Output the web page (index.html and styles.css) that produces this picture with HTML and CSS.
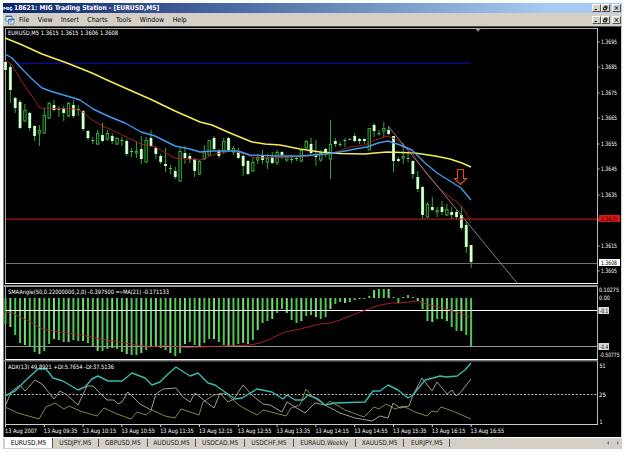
FILE: index.html
```html
<!DOCTYPE html>
<html>
<head lang="en">
    <meta charset="UTF-8">
    <title>18621: MIG Trading Station - [EURUSD,M5]</title>
    <link rel="stylesheet" href="styles.css">
</head>
<body>
<div class="window">
    <div class="titlebar">
        <svg class="logo" width="10" height="8" viewBox="0 0 10 8"><path d="M1 6V3l1.5 2L4 3v3M5.2 3v3M9 3.4H7V6h2V4.7" /></svg>
        <span class="title">18621: MIG Trading Station - [EURUSD,M5]</span>
        <div class="buttons">
            <svg class="btn" viewBox="0 0 9 8"><path d="M2 6h3" /></svg>
            <svg class="btn" viewBox="0 0 9 8"><path d="M3.5 3V1.5h3v3H5.5M2 3.5h3.5v3H2z" /></svg>
            <svg class="btn close" viewBox="0 0 9 8"><path d="M2.5 1.8l4 4.4M6.5 1.8l-4 4.4" /></svg>
        </div>
    </div>
    <div class="menubar">
        <svg class="docicon" width="10" height="10" viewBox="0 0 10 10">
            <path fill="#fff" stroke="#4a86c8" d="M1 1h6v5H1zM3.5 4h5.5v5H3.5z" />
            <path stroke="#2f62b0" fill="none" d="M1 1.5h6M3.5 4.5H9M5 7.5l1-1 1 1" />
        </svg>
        <ul class="menu">
            <li>File</li>
            <li>View</li>
            <li>Insert</li>
            <li>Charts</li>
            <li>Tools</li>
            <li>Window</li>
            <li>Help</li>
        </ul>
        <div class="buttons">
            <svg class="btn" viewBox="0 0 9 8"><path d="M2 6h3" /></svg>
            <svg class="btn" viewBox="0 0 9 8"><path d="M3.5 3V1.5h3v3H5.5M2 3.5h3.5v3H2z" /></svg>
            <svg class="btn close" viewBox="0 0 9 8"><path d="M2.5 1.8l4 4.4M6.5 1.8l-4 4.4" /></svg>
        </div>
    </div>
    <div class="charts">
        <svg id="price" class="pane" width="617" height="258" viewBox="4 27 617 258"></svg>
        <svg id="angle" class="pane" width="617" height="75" viewBox="4 285 617 75"></svg>
        <svg id="adx" class="pane" width="617" height="77" viewBox="4 360 617 77"></svg>
    </div>
    <div class="tabbar">
        <ul class="tabs">
            <li class="active">EURUSD,M5</li>
            <li class="narrow">USDJPY,M5</li>
            <li>GBPUSD,M5</li>
            <li>AUDUSD,M5</li>
            <li>USDCAD,M5</li>
            <li>USDCHF,M5</li>
            <li class="wide">EURAUD,Weekly</li>
            <li>XAUUSD,M5</li>
            <li class="narrow">EURJPY,M5</li>
        </ul>
        <svg class="arrows" width="14" height="6" viewBox="0 0 14 6"><path d="M3 1L1 3l2 2zM11 1l2 2-2 2z" /></svg>
    </div>
</div>
<script src="chart.js"></script>
</body>
</html>
```
FILE: styles.css
```css
*{
    margin: 0;
    padding: 0;
    box-sizing: border-box;
}
body{
    width: 625px;
    height: 452px;
    padding: 3px 3px 0 3px;
    background: #fbfdfd;
    font-family: "DejaVu Sans Condensed","DejaVu Sans",sans-serif;
    font-size: 7px;
    overflow: hidden;
}
ul{
    list-style: none;
}
svg{
    display: block;
}
.window{
    width: 619px;
    height: 446px;
    background: #d4d0c8;
}
.titlebar{
    height: 10px;
    display: flex;
    align-items: center;
    padding-right: 1px;
    background: linear-gradient(to right,#0a246a,#a6caf0 88%);
}
.logo{
    fill: none;
    stroke: #fff;
}
.title{
    flex: 1;
    padding-left: 1px;
    color: #fff;
    font-size: 6.7px;
    font-weight: bold;
    line-height: 10px;
    white-space: nowrap;
}
.buttons{
    display: flex;
}
.btn{
    width: 9px;
    height: 8px;
    background: #d4d0c8;
    border: 1px solid #fff;
    border-right-color: #555;
    border-bottom-color: #555;
    fill: none;
    stroke: #000;
    stroke-width: 1.2;
}
.close{
    margin-left: 2px;
}
.menubar{
    height: 13px;
    display: flex;
    align-items: center;
    padding: 0 1px 0 2px;
}
.menu{
    flex: 1;
    display: flex;
    gap: 8.5px;
    padding-left: 4px;
    font-size: 6.9px;
    line-height: 12px;
    color: #000;
}
.charts{
    height: 411px;
    padding-left: 1px;
    background: #000;
    border-top: 1px solid #55534f;
    border-left: 1px solid #808080;
    border-right: 1px solid #d4d0c8;
    overflow: hidden;
}
.pane{
    margin-left: -1px;
    font-size: 6px;
    fill: #fff;
}
.line{
    fill: none;
    stroke-linejoin: round;
}
.tabbar{
    height: 12px;
    display: flex;
    justify-content: space-between;
    background: #d4d0c8;
    border-top: 1px solid #fff;
}
.tabs{
    display: flex;
    padding-left: 2px;
}
.tabs li{
    width: 48.7px;
    height: 8px;
    margin-top: 1px;
    border-right: 1px solid #555;
    text-align: center;
    font-size: 6.6px;
    line-height: 8px;
    color: #222;
    white-space: nowrap;
}
.tabs .active{
    width: 48px;
    height: 10px;
    margin-top: 0;
    background: #fff;
    line-height: 10px;
    color: #000;
}
.tabs .narrow{
    width: 46px;
}
.tabs .wide{
    width: 62px;
}
.arrows{
    margin: 2px 2px 0 0;
    fill: #777;
}
```
FILE: chart.js
```js
var NS="http://www.w3.org/2000/svg";
var step=4.85;//distance between two bars
var startX=5.5;

function add(pane,name,attrs,text){
    var el=document.createElementNS(NS,name);
    for(var k in attrs){
        el.setAttribute(k,attrs[k]);
    }
    if(text!=null){
        el.textContent=text;
    }
    document.getElementById(pane).appendChild(el);
}
function rect(pane,x,y,w,h,fill){
    add(pane,"rect",{x:x,y:y,width:w,height:h,fill:fill});
}
function line(pane,points,color,width){
    add(pane,"polyline",{"class":"line",points:points,stroke:color,"stroke-width":width});
}
function label(pane,x,y,w,text,fill){
    add(pane,"text",{x:x,y:y,textLength:w,lengthAdjust:"spacingAndGlyphs",fill:fill||"#fff"},text);
}

//frames
rect("price",5,28,593,1,"#aaa");
rect("price",5,28,1,256,"#aaa");
rect("price",597,28,1,256,"#bbb");
rect("price",5,283,593,1,"#fff");
rect("angle",4,285,594,2,"#999");
rect("angle",5,287,1,72,"#aaa");
rect("angle",597,287,1,73,"#bbb");
rect("angle",5,359,593,1,"#fff");
rect("adx",4,360,594,1.5,"#777");
rect("adx",5,361,1,64,"#aaa");
rect("adx",597,361,1,64,"#bbb");
rect("adx",5,424,593,1,"#ccc");

//price levels
rect("price",16,62.5,455,1.5,"#0b0b80");
rect("price",6,263,591,1,"#6a7078");

//candles: high, body top, body bottom, low, type (1 down, 0 up, 2 doji)
var candles=[
    [60,62,70,72,1],[64,67,90,103,1],[97,98,108,113,1],[100,102,128,129,1],[104,110,121,122,0],
    [112,113,128,131,1],[125,126,136,141,1],[125,130,133,146,0],[108,115,133,134,0],[102,103,118,119,0],
    [100,105,110,111,1],[106,109,110,117,2],[106,108,113,121,1],[102,103,116,117,0],[100,105,116,118,1],
    [105,109,110,116,2],[110,111,129,131,1],[130,131,138,140,1],[137,140,141,144,2],[130,133,144,145,0],
    [123,135,141,142,1],[130,133,139,141,0],[133,136,141,144,1],[137,138,144,145,0],[137,140,141,146,2],
    [139,141,154,156,1],[148,151,152,157,2],[142,151,153,158,0],[136,149,159,164,1],[137,140,162,163,0],
    [130,138,146,147,1],[146,148,154,159,1],[154,156,162,164,1],[148,164,166,172,1],[165,168,169,174,2],
    [167,171,177,179,1],[148,151,181,182,0],[146,153,158,164,1],[153,156,159,163,1],[158,159,171,177,1],
    [160,161,174,175,0],[145,151,159,160,0],[140,140,155,155,0],[136,138,149,150,1],[149,151,156,158,1],
    [138,141,151,154,0],[137,138,150,151,1],[146,148,152,155,0],[148,152,158,159,1],[154,156,166,176,1],
    [160,161,174,175,1],[158,162,171,172,0],[154,157,160,164,0],[150,156,160,164,1],[154,158,162,169,0],
    [152,157,163,164,1],[150,152,163,165,0],[151,152,155,159,1],[156,157,160,162,0],[155,159,160,163,2],
    [156,158,159,161,2],[149,150,161,162,0],[140,141,148,149,0],[138,144,153,154,1],[140,154,157,166,1],
    [150,153,160,162,0],[148,149,153,157,1],[120,144,159,179,0],[138,141,144,147,1],[142,144,145,147,2],
    [138,140,141,147,2],[138,139,140,140,2],[133,136,141,142,1],[138,139,141,144,1],[138,139,141,144,1],
    [128,128,150,150,0],[123,125,131,137,1],[130,133,134,136,2],[122,128,131,137,0],[127,130,134,135,1],
    [136,136,161,172,1],[157,159,161,162,1],[143,156,158,164,0],[152,158,159,162,2],[160,161,174,179,1],
    [171,177,189,192,1],[186,187,215,219,1],[202,204,217,218,0],[197,207,210,211,1],[207,210,212,217,0],
    [201,207,212,215,1],[204,209,215,216,0],[207,212,215,219,1],[210,212,217,219,1],[206,215,228,230,1],
    [221,225,247,253,1],[245,245,262,268,1]
];
for(var i=0;i<candles.length;i++){
    var c=candles[i];
    var x=startX+i*step;
    rect("price",x-0.5,c[0],1,c[3]-c[0],"#35a53b");
    if(c[4]==1){
        rect("price",x-1.5,c[1],3,c[2]-c[1],"#72df72");
        rect("price",x-1,c[1],2,c[2]-c[1],"#e4ffe0");
    }
    else if(c[4]==0){
        add("price","rect",{x:x-1.2,y:c[1]+0.5,width:2.4,height:c[2]-c[1]-0.5,fill:"#001500",stroke:"#38b03e","stroke-width":0.9});
    }
    else{
        rect("price",x-1.5,c[1],3,1,"#4fc953");
    }
}

//moving averages
line("price","5,38 20,44 42,54 67,63 92,73 107,80 125,88 150,99 175,111 200,122 212,125 230,133 252,142 265,144 280,145 300,149 320,152 340,153.5 365,154 375,153 387,152 415,153 435,156 450,159 462,163 471,167","#f4ed55",1.5);
line("price","5,60 12,65 22,82 32,96 40,108 75,109 83,112 92,120 103,126 120,134 141,144 155,147 175,158 200,160 215,154 232,151 245,154 255,158 300,157 330,154 350,147 365,145 375,140 388,136 395,139 410,150 420,165 430,178 440,189 450,197 457,202 465,211 471,223","#b02323",0.9);
line("price","5,54 12,58 22,69 32,79 42,88 50,91 67,96 80,100 93,109 110,117 125,123 141,132 155,136 175,146 190,149 200,152 212,151 238,151 250,155 280,156 300,156 325,154 340,152 355,149 367,147 378,143 388,141 400,145 412,150 425,163 437,173 450,181 461,188 471,200","#3f9af0",1.4);
line("price","388,126 517,283","#b79c9c",0.8);
rect("price",6,218.6,591,1,"#d01c1c");
add("price","path",{d:"M457.5 169.500h6v9h3l-6 6-6-6h3z",fill:"#000",stroke:"#df4a25","stroke-width":1.2});
add("price","path",{d:"M475.500 29h5l-2.500 3z",fill:"#888"});
label("price",8,35.300,110,"EURUSD,M5  1.3615 1.3615 1.3606 1.3608");

//price scale
var prices=["1.3695","1.3685","1.3675","1.3665","1.3655","1.3645","1.3635","","1.3615","1.3605"];
for(var i=0;i<prices.length;i++){
    var y=42+i*25.45;
    rect("price",598,Math.round(y)-0.5,1.5,1,"#bbb");
    if(prices[i]){
        label("price",601,y+2,16,prices[i]);
    }
}
rect("price",599,215,21,7,"#d91515");
label("price",601,220.7,16,"1.3625","#3a0000");
rect("price",599,259,21,7,"#fff");
label("price",601,264.700,16,"1.3608","#000");

//SMAAngle histogram, positive values end above the zero line
var zero=298;
var hist=[324,327,335,343,345,347,352,354,351,344,339,340,342,342,340,341,341,343,346,351,351,349,348,349,352,354,355,355,353,350,347,346,348,350,353,356,353,344,342,345,347,343,339,339,342,345,347,347,344,343,344,340,330,323,321,319,313,309,313,320,323,321,316,315,317,319,317,309,304,302,303,302,300,299,299,296,290,289,289,289,297,303,297,295,297,301,309,321,322,319,319,321,327,331,331,335,346];
for(var i=0;i<hist.length;i++){
    rect("angle",startX+i*step-1,Math.min(zero,hist[i]),2,Math.abs(hist[i]-zero),i%3==1?"#7ddc78":"#4fc751");
}
rect("angle",6,310,591,1,"#fff");
rect("angle",6,346,591,1,"#999");
line("angle","5,312 12,313 20,317 32,323 42,329 60,332 82,335 100,339 125,343 150,347 165,345.500 185,347.500 200,347 250,345 260,343 270,339 285,332 300,329 320,324 330,323 340,320 360,312 380,305 392,303 400,303 418,301 430,305 450,310 462,314 471,318","#b52525",0.9);
label("angle",8,293.500,161,"SMAAngle(50,0.22000000,2,0) -0.397500  =»MA(21) -0.171133");
label("angle",599,291.500,20,"0.10275");
label("angle",599,300,11,"0.00");
rect("angle",598.500,307,10.500,7,"#ddd");
label("angle",600,312.500,8,"-0.1","#000");
rect("angle",598.500,343,10.500,7,"#ddd");
label("angle",600,348.500,8,"-0.4","#000");
label("angle",599.500,356.700,20,"-0.50775");

//ADX
add("adx","line",{x1:6,y1:394.500,x2:597,y2:394.500,stroke:"#bbb","stroke-dasharray":"2 1.700"});
line("adx","5,407 18,413 39,419 46,407 55,403 64,409 69,406 80,411 97,416 104,408 117,414 131,419 137,412 146,415 152,410 165,416 175,418 181,409 190,412 199,415 203,402 214,395 225,393 240,406 257,415 263,410 275,413 286,416 291,408 300,405 306,389 313,397 325,405 330,401 345,410 364,417 374,407 379,409 386,404 395,409 403,406 415,412 427,416 432,411 437,412 441,407 455,412 471,419","#8c9650",0.9);
line("adx","5,407 11,392 20,385 25,391 35,380 42,384 54,399 60,391 67,395 78,405 87,386 93,386 107,400 114,400 118,404 122,402 128,392 140,404 151,410 156,394 163,389 176,388 183,397 190,402 195,393 205,401 214,408 220,393 228,402 234,399 243,385 253,396 263,404 270,405 282,412 287,402 295,407 305,413 315,403 325,405 340,413 355,418 372,421 380,416 388,418 393,403 400,408 409,406 413,395 422,378 432,391 437,382 447,394 452,390 456,396 460,393 471,379","#b5a9a3",0.9);
line("adx","5,396 15,391 25,381 38,369 46,369 53,378 63,381 78,390 85,387 92,379 98,376 108,381 122,381 132,373 145,378 152,385 160,382 168,374 176,367 190,376 198,373 208,383 215,385 235,399 242,398 257,389 272,392 283,399 287,395 295,400 303,400 308,395 318,399 325,405 335,403 365,402 373,391 380,391 388,385 398,390 408,398 413,395 425,380 433,378 440,376 447,377 457,376 465,370 471,363","#39b9b0",1.4);
label("adx",8,369,106,"ADX(13) 49.8921 +DI:5.7654 -DI:37.5136");
label("adx",599.500,367.500,6,"51");
label("adx",599,396.500,7,"25");
label("adx",599.500,423.500,3,"1");

//time scale, one label every 8 bars
var times=["2007","09:35","10:15","10:55","11:35","12:15","12:55","13:35","14:15","14:55","15:35","16:15","16:55"];
for(var i=0;i<times.length;i++){
    var x=5+i*38.8;
    rect("adx",x,425,1,2,"#ccc");
    label("adx",x,432.700,i==0?32:33.500,"13 Aug "+times[i]);
}
```
